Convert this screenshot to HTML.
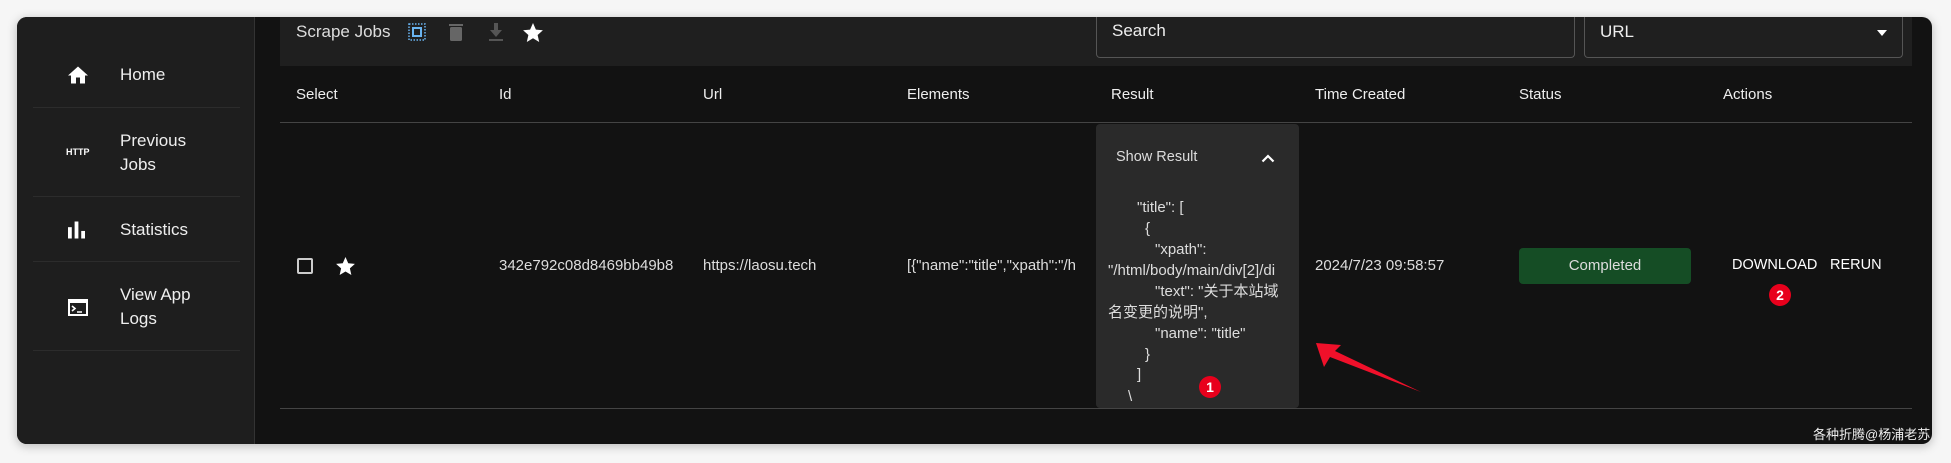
<!DOCTYPE html>
<html><head><meta charset="utf-8"><style>
*{margin:0;padding:0;box-sizing:border-box}
body{width:1951px;height:463px;background:#f6f6f6;font-family:"Liberation Sans","Noto Sans CJK SC",sans-serif;position:relative;overflow:hidden;color:#fff}
.win{position:absolute;left:17px;top:17px;width:1915px;height:427px;background:#121212;border-radius:10px;overflow:hidden;box-shadow:0 2px 10px rgba(0,0,0,.25)}
.side{position:absolute;left:0;top:0;width:238px;height:427px;background:#1e1e1e;border-right:1px solid #333}
.nav{position:absolute;left:16px;width:207px;border-bottom:1px solid #2c2c2c}
.nav span{position:absolute;left:87px;font-size:17px;line-height:24px;color:#eee}
.nav svg,.nav b{position:absolute;left:35px}
.a{position:absolute;white-space:nowrap}
.h{font-size:15px;top:69px;color:#eee}
.c{font-size:15px;top:240px;color:#ddd}
.j{position:absolute;font-size:15px;color:#ddd;white-space:nowrap;line-height:21px}
</style></head><body>
<div class="win">
<div class="side">
 <div class="nav" style="top:0;height:91px"><svg style="top:49px" width="20" height="18" viewBox="0 0 20 17"><path d="M8 17v-6h4v6h5V9h3L10 0 0 9h3v8z" fill="#fff"/></svg><span style="top:46px">Home</span></div>
 <div class="nav" style="top:91px;height:89px"><b style="top:39px;font-size:9px;font-weight:bold;left:33px">HTTP</b><span style="top:21px">Previous<br>Jobs</span></div>
 <div class="nav" style="top:180px;height:65px"><svg style="top:24px" width="17" height="18" viewBox="0 0 18 18"><rect x="0" y="6" width="4" height="12" fill="#fff"/><rect x="7" y="0" width="4" height="18" fill="#fff"/><rect x="14" y="10" width="4" height="8" fill="#fff"/></svg><span style="top:21px">Statistics</span></div>
 <div class="nav" style="top:245px;height:89px"><svg style="top:37px" width="20" height="17" viewBox="0 0 20 17"><rect x="1" y="1" width="18" height="15" fill="none" stroke="#fff" stroke-width="2"/><rect x="1" y="1" width="18" height="3" fill="#fff"/><path d="M4 7l3 2.5-3 2.5M9 13h5" stroke="#fff" stroke-width="1.6" fill="none"/></svg><span style="top:21px">View App<br>Logs</span></div>
</div>
<div style="position:absolute;left:263px;top:0;width:1632px;height:49px;background:#1f1f1f"></div>
<div class="a" style="left:279px;top:5px;font-size:17px;color:#ddd">Scrape Jobs</div>
<svg class="a" style="left:391px;top:6px" width="18" height="18" viewBox="0 0 18 18"><rect x="1" y="1" width="16" height="16" fill="none" stroke="#6ab4f0" stroke-width="1.5" stroke-dasharray="1.5 1.5"/><rect x="5" y="5" width="8" height="8" fill="none" stroke="#6ab4f0" stroke-width="2"/></svg>
<svg class="a" style="left:432px;top:6px" width="14" height="18" viewBox="0 0 14 18"><rect x="0" y="1" width="14" height="2" fill="#666"/><rect x="1" y="4" width="12" height="14" rx="1.5" fill="#666"/></svg>
<svg class="a" style="left:471px;top:6px" width="16" height="18" viewBox="0 0 16 18"><path d="M6 0h4v7h4l-6 7-6-7h4z" fill="#555"/><rect x="1" y="16" width="14" height="2" fill="#555"/></svg>
<svg class="a" style="left:506px;top:6px" width="20" height="19" viewBox="0 0 24 23"><path d="M12 0l3.5 8 8.5.8-6.4 5.7 1.9 8.5L12 18.5 4.5 23l1.9-8.5L0 8.8 8.5 8z" fill="#fff"/></svg>
<div class="a" style="left:1079px;top:0;width:479px;height:41px;border:1px solid #555;border-top:none;border-radius:0 0 4px 4px"></div>
<div class="a" style="left:1095px;top:4px;font-size:17px;color:#eee">Search</div>
<div class="a" style="left:1567px;top:0;width:319px;height:41px;border:1px solid #555;border-top:none;border-radius:0 0 4px 4px"></div>
<div class="a" style="left:1583px;top:5px;font-size:17px;color:#eee">URL</div>
<div class="a" style="left:1860px;top:13px;border:5px solid transparent;border-top:6px solid #fff"></div>
<div class="h a" style="left:279px">Select</div><div class="h a" style="left:482px">Id</div><div class="h a" style="left:686px">Url</div><div class="h a" style="left:890px">Elements</div><div class="h a" style="left:1094px">Result</div><div class="h a" style="left:1298px">Time Created</div><div class="h a" style="left:1502px">Status</div><div class="h a" style="left:1706px">Actions</div>
<div class="a" style="left:263px;top:105px;width:1632px;height:1px;background:#444"></div>
<div class="a" style="left:263px;top:391px;width:1632px;height:1px;background:#444"></div>
<div class="a" style="left:1079px;top:107px;width:203px;height:284px;background:#2a2a2a;border-radius:4px;overflow:hidden">
 <div class="a" style="left:20px;top:25px;font-size:14.5px;color:#ddd">Show Result</div>
 <svg class="a" style="left:165px;top:30px" width="14" height="9" viewBox="0 0 14 9"><path d="M1.5 7.5L7 2l5.5 5.5" stroke="#fff" stroke-width="2.2" fill="none"/></svg>
 <div class="j" style="left:41px;top:73px">"title": [</div>
 <div class="j" style="left:49px;top:94px">{</div>
 <div class="j" style="left:59px;top:115px">"xpath":</div>
 <div class="j" style="left:12px;top:136px">"/html/body/main/div[2]/di</div>
 <div class="j" style="left:59px;top:157px">"text": "关于本站域</div>
 <div class="j" style="left:12px;top:178px">名变更的说明",</div>
 <div class="j" style="left:59px;top:199px">"name": "title"</div>
 <div class="j" style="left:49px;top:220px">}</div>
 <div class="j" style="left:41px;top:240px">]</div>
 <div class="j" style="left:32px;top:262px">\</div>
 <div class="a" style="left:103px;top:252px;width:22px;height:22px;border-radius:50%;background:#e8001c;font-size:14px;font-weight:bold;text-align:center;line-height:22px">1</div>
</div>
<div class="a" style="left:280px;top:241px;width:16px;height:16px;border:2px solid #ccc;border-radius:2px"></div>
<svg class="a" style="left:319px;top:240px" width="19" height="18" viewBox="0 0 24 23"><path d="M12 0l3.5 8 8.5.8-6.4 5.7 1.9 8.5L12 18.5 4.5 23l1.9-8.5L0 8.8 8.5 8z" fill="#fff"/></svg>
<div class="c a" style="left:482px">342e792c08d8469bb49b8</div>
<div class="c a" style="left:686px">https://laosu.tech</div>
<div class="c a" style="left:890px">[{"name":"title","xpath":"/h</div>
<div class="c a" style="left:1298px">2024/7/23 09:58:57</div>
<div class="a" style="left:1502px;top:231px;width:172px;height:36px;background:#154d25;border-radius:4px;font-size:15px;text-align:center;line-height:36px;color:#ddd">Completed</div>
<div class="c a" style="left:1715px;color:#fff;font-size:14.5px">DOWNLOAD</div>
<div class="c a" style="left:1813px;color:#fff;font-size:14.5px">RERUN</div>
<div class="a" style="left:1752px;top:267px;width:22px;height:22px;border-radius:50%;background:#e8001c;font-size:14px;font-weight:bold;text-align:center;line-height:22px">2</div>
<svg class="a" style="left:0;top:0" width="1915" height="427"><path d="M1299 326L1307 350L1313 340L1404 375L1318 334L1324 328Z" fill="#f0102a"/></svg>
<div class="a" style="left:1796px;top:407px;font-size:13px;color:#eee">各种折腾@杨浦老苏</div>
</div>
</body></html>
